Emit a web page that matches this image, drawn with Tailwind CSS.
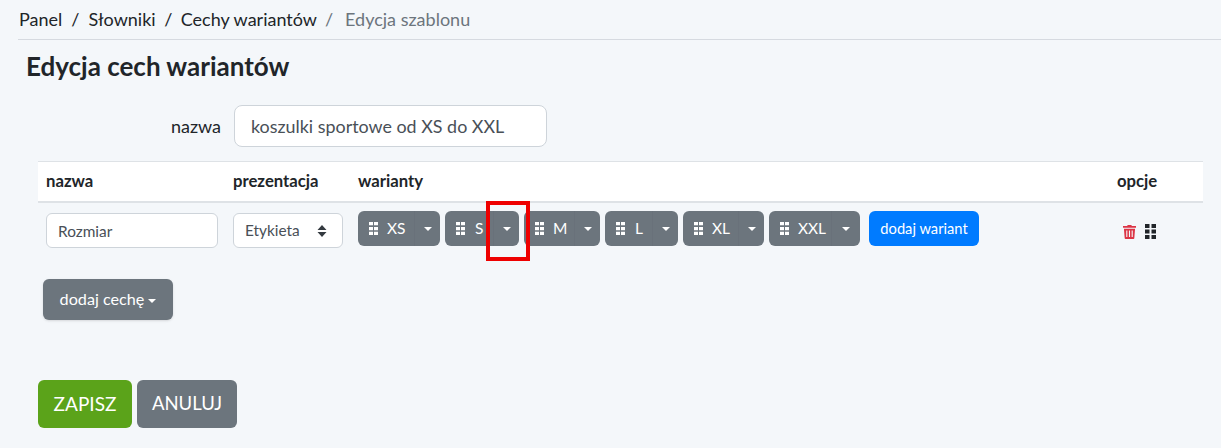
<!DOCTYPE html>
<html lang="pl">
<head>
    <meta charset="UTF-8">
    <title>Edycja cech wariantów</title>
    <script src="https://cdn.jsdelivr.net/npm/@tailwindcss/browser@4"></script>
</head>
<body class="bg-[#f4f7fa] font-['Lato',sans-serif] text-[#212529] overflow-hidden">
    <div class="relative h-[448px] w-[1221px]">
        <!-- Breadcrumb -->
        <nav class="ml-[18px] h-[40px] border-b border-[#d6dae0] pl-[1px] flex items-center text-[18px] text-[#212529] pb-[1px]">
            <span>Panel</span>
            <span class="mx-[9px]">/</span>
            <span>Słowniki</span>
            <span class="mx-[8.5px]">/</span>
            <span>Cechy wariantów</span>
            <span class="ml-[8px] mr-[12px] text-[#6c757d]">/</span>
            <span class="text-[#6c757d]">Edycja szablonu</span>
        </nav>

        <h1 class="ml-[26px] mt-[9px] h-[34px] text-[26px] leading-[34px] font-bold">Edycja cech wariantów</h1>

        <!-- Template name -->
        <div class="mt-[22px] flex items-center h-[42px]">
            <label class="w-[221px] text-right text-[18px] text-[#212529]">nazwa</label>
            <input value="koszulki sportowe od XS do XXL" class="ml-[13px] w-[313px] h-[42px] px-[16px] bg-white border border-[#ced4da] rounded-[8px] text-[17.9px] text-[#495057]">
        </div>

        <!-- Features table -->
        <div class="mt-[14px] ml-[38px] w-[1165px]">
            <div class="h-[42px] bg-white border-t border-b-2 border-[#dee2e6] flex items-center text-[16.7px] font-bold">
                <div class="w-[195px] pl-[8px]">nazwa</div>
                <div class="w-[125px]">prezentacja</div>
                <div class="w-[759px]">warianty</div>
                <div>opcje</div>
            </div>
            <div class="flex items-start pt-[8px]">
                <input value="Rozmiar" class="ml-[8px] mt-[2px] w-[172px] h-[35px] px-[11px] bg-white border border-[#ced4da] rounded-[6px] text-[15.4px] text-[#495057]">
                <div class="ml-[15px] mt-[2px] w-[110px] h-[35px] pl-[11px] pr-[15px] bg-white border border-[#ced4da] rounded-[6px] text-[15.4px] text-[#495057] flex items-center justify-between">
                    <span>Etykieta</span>
                    <svg width="10" height="14" viewBox="0 0 10 14" class="fill-[#343a40]"><path d="M5 1l4.500 5h-9zM5 13L.5 8h9z"/></svg>
                </div>

                <div class="ml-[15px] flex gap-[5px] text-[15.5px] text-white">
                    <div class="flex h-[35px] w-[82px] rounded-[6px] bg-[#6c757d]">
                        <div class="w-[57px] flex items-center pl-[11px] border-r border-[#69717a]">
                            <svg width="9" height="13" viewBox="0 0 9 12" preserveAspectRatio="none" class="fill-white shrink-0"><path d="M0 0h4v3H0zM5 0h4v3H5zM0 4.500h4v3H0zM5 4.500h4v3H5zM0 9h4v3H0zM5 9h4v3H5z"/></svg>
                            <span class="ml-[9px]">XS</span>
                        </div>
                        <div class="flex-1 flex items-center justify-center"><div class="border-x-[4px] border-t-[4px] border-x-transparent border-t-white"></div></div>
                    </div>
                    <div class="flex h-[35px] w-[74px] rounded-[6px] bg-[#6c757d]">
                        <div class="w-[49px] flex items-center pl-[11px] border-r border-[#69717a]">
                            <svg width="9" height="13" viewBox="0 0 9 12" preserveAspectRatio="none" class="fill-white shrink-0"><path d="M0 0h4v3H0zM5 0h4v3H5zM0 4.500h4v3H0zM5 4.500h4v3H5zM0 9h4v3H0zM5 9h4v3H5z"/></svg>
                            <span class="ml-[10px]">S</span>
                        </div>
                        <div class="flex-1 flex items-center justify-center"><div class="border-x-[4px] border-t-[4px] border-x-transparent border-t-white"></div></div>
                    </div>
                    <div class="flex h-[35px] w-[76px] rounded-[6px] bg-[#6c757d]">
                        <div class="w-[51px] flex items-center pl-[11px] border-r border-[#69717a]">
                            <svg width="9" height="13" viewBox="0 0 9 12" preserveAspectRatio="none" class="fill-white shrink-0"><path d="M0 0h4v3H0zM5 0h4v3H5zM0 4.500h4v3H0zM5 4.500h4v3H5zM0 9h4v3H0zM5 9h4v3H5z"/></svg>
                            <span class="ml-[9px]">M</span>
                        </div>
                        <div class="flex-1 flex items-center justify-center"><div class="border-x-[4px] border-t-[4px] border-x-transparent border-t-white"></div></div>
                    </div>
                    <div class="flex h-[35px] w-[73px] rounded-[6px] bg-[#6c757d]">
                        <div class="w-[48px] flex items-center pl-[11px] border-r border-[#69717a]">
                            <svg width="9" height="13" viewBox="0 0 9 12" preserveAspectRatio="none" class="fill-white shrink-0"><path d="M0 0h4v3H0zM5 0h4v3H5zM0 4.500h4v3H0zM5 4.500h4v3H5zM0 9h4v3H0zM5 9h4v3H5z"/></svg>
                            <span class="ml-[10px]">L</span>
                        </div>
                        <div class="flex-1 flex items-center justify-center"><div class="border-x-[4px] border-t-[4px] border-x-transparent border-t-white"></div></div>
                    </div>
                    <div class="flex h-[35px] w-[81px] rounded-[6px] bg-[#6c757d]">
                        <div class="w-[56px] flex items-center pl-[11px] border-r border-[#69717a]">
                            <svg width="9" height="13" viewBox="0 0 9 12" preserveAspectRatio="none" class="fill-white shrink-0"><path d="M0 0h4v3H0zM5 0h4v3H5zM0 4.500h4v3H0zM5 4.500h4v3H5zM0 9h4v3H0zM5 9h4v3H5z"/></svg>
                            <span class="ml-[9px]">XL</span>
                        </div>
                        <div class="flex-1 flex items-center justify-center"><div class="border-x-[4px] border-t-[4px] border-x-transparent border-t-white"></div></div>
                    </div>
                    <div class="flex h-[35px] w-[91px] rounded-[6px] bg-[#6c757d]">
                        <div class="w-[63px] flex items-center pl-[11px] border-r border-[#69717a]">
                            <svg width="9" height="13" viewBox="0 0 9 12" preserveAspectRatio="none" class="fill-white shrink-0"><path d="M0 0h4v3H0zM5 0h4v3H5zM0 4.500h4v3H0zM5 4.500h4v3H5zM0 9h4v3H0zM5 9h4v3H5z"/></svg>
                            <span class="ml-[9px]">XXL</span>
                        </div>
                        <div class="flex-1 flex items-center justify-center"><div class="border-x-[4px] border-t-[4px] border-x-transparent border-t-white"></div></div>
                    </div>
                    <button class="ml-[4px] w-[110px] h-[35px] rounded-[6px] bg-[#007bff] text-[14.7px] text-white">dodaj wariant</button>
                </div>

                <!-- Row options -->
                <div class="ml-[144px] mt-[13px] flex items-center gap-[9px]">
                    <svg width="13" height="14" viewBox="0 0 14 15" class="fill-[#dc3545]"><path d="M5 0h4l.5 1H14v2H0V1h4.500zM1 4h12l-.8 10a1 1 0 0 1-1 1H2.800a1 1 0 0 1-1-1zm2.500 2v7h1.200V6zm2.900 0v7h1.200V6zm2.900 0v7h1.200V6z"/></svg>
                    <svg width="11" height="15" viewBox="0 0 11 15" class="fill-[#212529]"><path d="M0 0h4.500v4H0zM6.500 0H11v4H6.500zM0 5.500h4.500v4H0zM6.500 5.500H11v4H6.500zM0 11h4.500v4H0zM6.500 11H11v4H6.500z"/></svg>
                </div>
            </div>
        </div>

        <button class="block ml-[43px] mt-[31px] w-[130px] h-[41px] rounded-[6px] bg-[#6c757d] text-[16.2px] text-white shadow-sm">
            dodaj cechę<span class="inline-block ml-[4px] align-middle border-x-[4px] border-t-[4px] border-x-transparent border-t-white"></span>
        </button>

        <div class="ml-[38px] mt-[60px] flex gap-[5px]">
            <button class="w-[94px] h-[48px] rounded-[6px] bg-[#5ba31a] text-[19px] text-white">ZAPISZ</button>
            <button class="w-[100px] h-[48px] rounded-[6px] bg-[#6c757d] text-[18.5px] text-white">ANULUJ</button>
        </div>

        <!-- Red annotation box -->
        <div class="absolute left-[486px] top-[201px] w-[44px] h-[60px] border-[4px] border-[#ee0000]"></div>
    </div>
</body>
</html>
